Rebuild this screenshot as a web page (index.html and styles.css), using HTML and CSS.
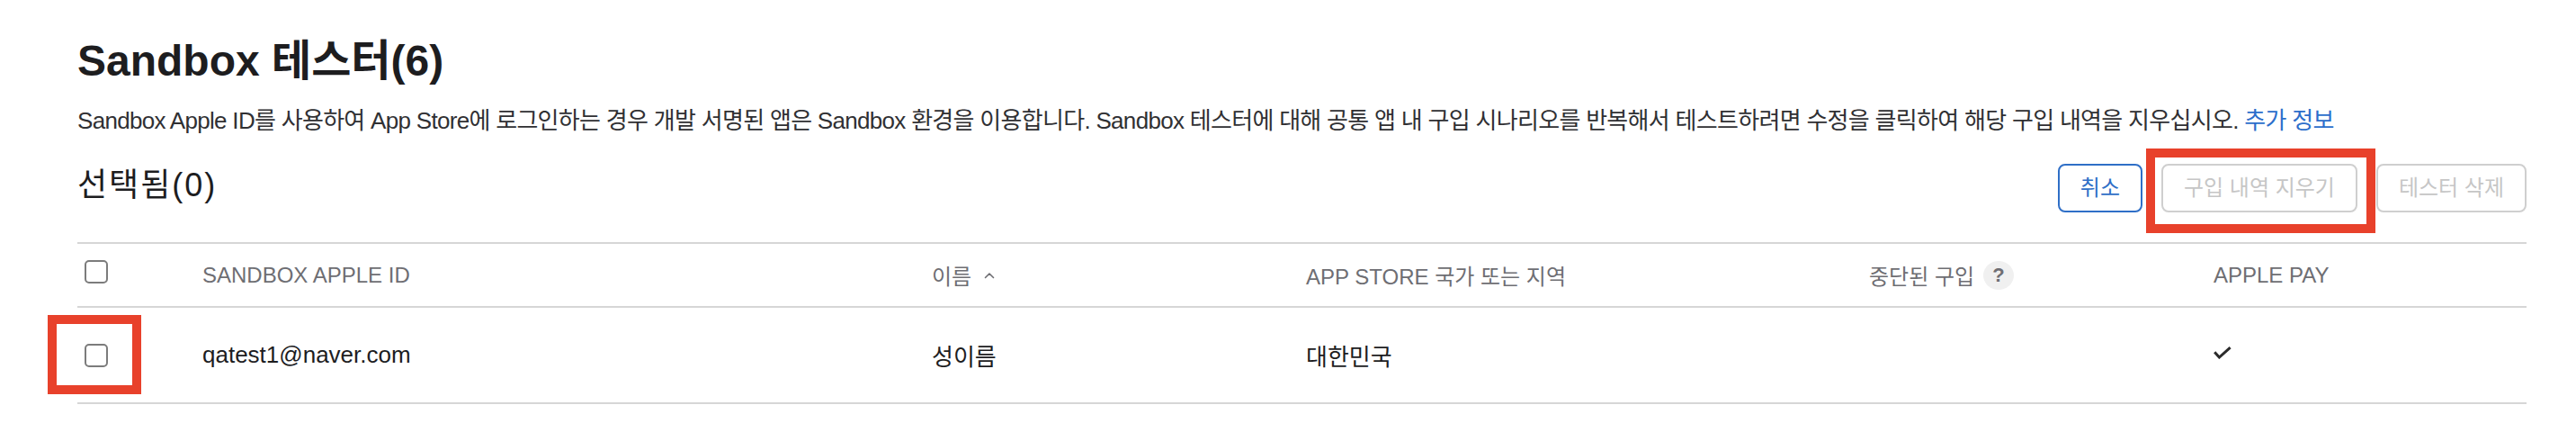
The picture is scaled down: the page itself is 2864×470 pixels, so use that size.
FILE: index.html
```html
<!DOCTYPE html>
<html lang="ko">
<head>
<meta charset="utf-8">
<title>Sandbox 테스터</title>
<link rel="stylesheet" href="styles.css">
</head>
<body>
<main class="page">
  <h1 class="title">Sandbox 테스터(6)</h1>
  <p class="desc">Sandbox Apple ID를 사용하여 App Store에 로그인하는 경우 개발 서명된 앱은 Sandbox 환경을 이용합니다. Sandbox 테스터에 대해 공통 앱 내 구입 시나리오를 반복해서 테스트하려면 수정을 클릭하여 해당 구입 내역을 지우십시오. <a class="link" href="#">추가 정보</a></p>

  <div class="toolbar">
    <h2 class="selected">선택됨(0)</h2>
    <div class="actions">
      <button class="btn btn-primary" type="button">취소</button>
      <span class="highlight highlight-btn"><button class="btn btn-disabled" type="button">구입 내역 지우기</button></span>
      <button class="btn btn-disabled" type="button">테스터 삭제</button>
    </div>
  </div>

  <div class="table">
    <div class="row head">
      <div class="cell cb-cell"><span class="checkbox checkbox-head"></span></div>
      <div class="cell">SANDBOX APPLE ID</div>
      <div class="cell">이름
        <svg class="caret" width="12" height="8" viewBox="0 0 12 8" aria-hidden="true"><polyline points="1.5,6.5 6,2 10.5,6.5" fill="none" stroke="#6e6e73" stroke-width="1.6" stroke-linecap="round" stroke-linejoin="round"/></svg>
      </div>
      <div class="cell">APP STORE 국가 또는 지역</div>
      <div class="cell">중단된 구입 <span class="help">?</span></div>
      <div class="cell">APPLE PAY</div>
    </div>
    <div class="row body">
      <div class="cell cb-cell"><span class="highlight highlight-cb"><span class="checkbox"></span></span></div>
      <div class="cell">qatest1@naver.com</div>
      <div class="cell">성이름</div>
      <div class="cell">대한민국</div>
      <div class="cell"></div>
      <div class="cell">
        <svg class="check" width="20" height="14" viewBox="0 0 20 14" aria-hidden="true"><polyline points="1.2,6.2 6.4,12 18.6,1.2" fill="none" stroke="#2b2b2b" stroke-width="3" stroke-linejoin="miter"/></svg>
      </div>
    </div>
  </div>
</main>
</body>
</html>
```
FILE: styles.css
```css
* { box-sizing: border-box; }

html, body {
  margin: 0;
  padding: 0;
  background: #ffffff;
}

body {
  font-family: "Liberation Sans", "Noto Sans CJK KR", Arial, sans-serif;
  color: #1d1d1f;
}

.page {
  padding: 39px 55px 0 86px;
}

.title {
  margin: 0;
  font-size: 48px;
  line-height: 58px;
  font-weight: 700;
  color: #1d1d1f;
}

.desc {
  margin: 19px 0 0;
  font-size: 26px;
  line-height: 36px;
  letter-spacing: -0.7px;
  color: #303033;
  white-space: nowrap;
}

.link {
  color: #2c6ecb;
  text-decoration: none;
}

.toolbar {
  margin-top: 30px;
  height: 54px;
  display: flex;
  align-items: center;
  justify-content: space-between;
}

.selected {
  margin: 0 0 6px;
  font-size: 36px;
  line-height: 42px;
  letter-spacing: 2px;
  font-weight: 400;
  color: #1d1d1f;
}

.actions {
  display: flex;
  gap: 21px;
  align-items: center;
}

.btn {
  height: 54px;
  padding: 0 23px;
  border-radius: 8px;
  border: 2px solid #cfcfcf;
  background: #ffffff;
  font-family: "Liberation Sans", "Noto Sans CJK KR", Arial, sans-serif;
  font-size: 24px;
  line-height: 50px;
  cursor: default;
}

.btn-primary {
  border-color: #2f6fc7;
  color: #2f6fc7;
}

.btn-disabled {
  color: #c6c6c6;
}

.highlight {
  position: relative;
  display: inline-flex;
}

.highlight::after {
  content: "";
  position: absolute;
  border: 10px solid #e8412b;
  pointer-events: none;
}

.highlight-btn::after {
  top: -17px;
  left: -17px;
  right: -20px;
  bottom: -23px;
}

.highlight-cb::after {
  top: -32px;
  left: -41px;
  right: -37px;
  bottom: -30px;
}

.table {
  margin-top: 33px;
  border-top: 2px solid #d6d6d6;
}

.row {
  display: grid;
  grid-template-columns: 139px 811px 416px 626px 383px 1fr;
  align-items: center;
  border-bottom: 2px solid #d6d6d6;
}

.row.head {
  height: 71px;
  font-size: 24px;
  color: #6e6e73;
}

.row.body {
  height: 107px;
  font-size: 26px;
  color: #1d1d1f;
}

.cell {
  display: flex;
  align-items: center;
  white-space: nowrap;
}

.cb-cell {
  padding-left: 8px;
}

.checkbox {
  display: block;
  width: 26px;
  height: 26px;
  border: 2px solid #7c7c7c;
  border-radius: 5px;
  background: #ffffff;
}

.checkbox-head {
  margin-bottom: 7px;
}

.caret {
  margin-left: 14px;
}

.help {
  display: inline-flex;
  align-items: center;
  justify-content: center;
  width: 34px;
  height: 32px;
  margin-left: 10px;
  border-radius: 50%;
  background: #f0f0f0;
  color: #6e6e73;
  font-size: 22px;
  font-weight: 700;
}

.check {
  display: block;
  margin-top: -6px;
}
```
